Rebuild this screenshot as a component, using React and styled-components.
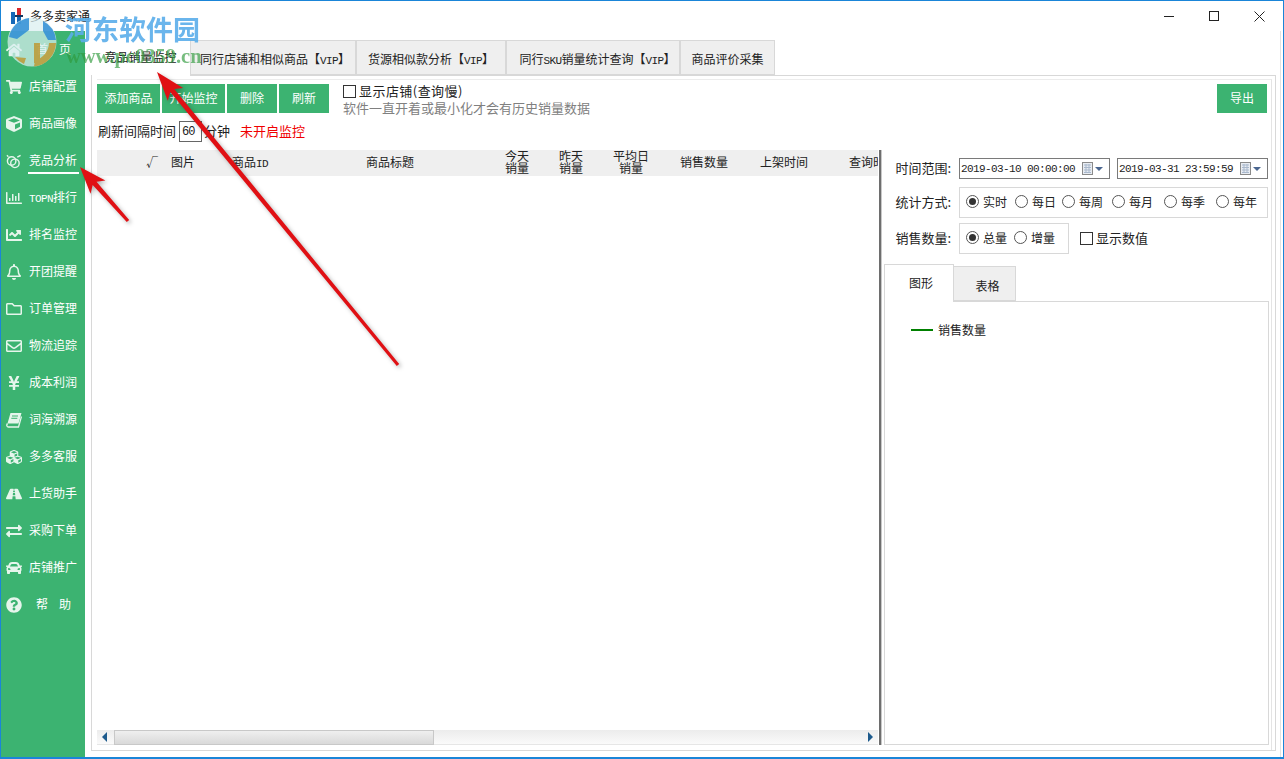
import React from "react";
import styled, { createGlobalStyle } from "styled-components";
import {
  FaHome,
  FaShoppingCart,
  FaCube,
  FaRegChartBar,
  FaChartLine,
  FaRegBell,
  FaRegFolder,
  FaRegEnvelope,
  FaYenSign,
  FaCubes,
  FaRoad,
  FaExchangeAlt,
  FaCar,
  FaQuestionCircle,
} from "react-icons/fa";

const GREEN = "#3cb371";
const LINE = "#d8d8d8";
const CJK = `"Noto Sans CJK SC", "Noto Sans", sans-serif`;
const NARROW = `11px "Liberation Mono", monospace`;

const Global = createGlobalStyle`
  html, body { margin: 0; padding: 0; background: #fff; }
  body { font: 12px ${CJK}; color: #222; }
  * { box-sizing: border-box; }
`;

const Window = styled.div`
  position: relative;
  width: 1284px;
  height: 759px;
  border: 1px solid #1a85d8;
  border-bottom-width: 2px;
  display: flex;
  flex-direction: column;
  overflow: hidden;
  background: #fff;
`;

const TitleBar = styled.div`
  height: 30px;
  flex: none;
  display: flex;
  align-items: center;
  padding-left: 9px;
`;

const TitleText = styled.span`
  margin-left: 6px;
  margin-bottom: 1px;
  font-size: 12px;
  color: #222;
`;

const WinButtons = styled.div`
  margin-left: auto;
  display: flex;
  align-items: center;
  margin-right: 18px;
  gap: 35px;
`;

const Body = styled.div`
  flex: 1;
  display: flex;
  min-height: 0;
`;

const Sidebar = styled.nav`
  width: 84px;
  flex: none;
  background: ${GREEN};
`;

const NavItem = styled.div`
  position: relative;
  height: 37px;
  display: flex;
  align-items: center;
  padding-left: 5px;
  color: #fff;
  font-size: 12px;
  &::after {
    content: "";
    display: ${(p) => (p.$active ? "block" : "none")};
    position: absolute;
    left: 27px;
    width: 51px;
    bottom: 5px;
    height: 2px;
    background: #fff;
  }
`;

const NavIcon = styled.span`
  width: 16px;
  height: 16px;
  flex: none;
  display: flex;
  align-items: center;
  justify-content: center;
  color: #e6f5ec;
  font-size: 16px;
`;

const NavLabel = styled.span`
  margin-left: ${(p) => (p.$wide ? "14px" : "7px")};
  width: ${(p) => (p.$wide ? "35px" : "auto")};
  padding-bottom: 2px;
  display: flex;
  justify-content: space-between;
  white-space: nowrap;
`;

const Half = styled.span`
  font: ${NARROW};
  letter-spacing: -0.6px;
`;

const Main = styled.main`
  flex: 1;
  min-width: 0;
  display: flex;
  flex-direction: column;
  padding: 7px 4px 6px 6px;
  margin-right: 2px;
  border-right: 1px solid #e2e2e2;
`;

const TabBar = styled.div`
  display: flex;
  align-items: flex-end;
  flex: none;
  padding-left: 1px;
`;

const TopTab = styled.div`
  position: relative;
  height: ${(p) => (p.$active ? "38px" : "35px")};
  width: ${(p) => p.$w}px;
  margin-bottom: ${(p) => (p.$active ? "-1px" : "0")};
  display: flex;
  align-items: center;
  justify-content: center;
  background: ${(p) => (p.$active ? "#fff" : "#efefef")};
  border: 1px solid ${LINE};
  border-left-width: ${(p) => (p.$active ? "0" : "1px")};
  border-bottom-width: ${(p) => (p.$active ? "0" : "1px")};
  border-top-color: ${(p) => (p.$active ? "#fff" : LINE)};
  border-right-color: ${(p) => (p.$active ? "#fff" : LINE)};
  z-index: ${(p) => (p.$active ? 1 : 0)};
  font-size: 12px;
  white-space: nowrap;
  padding-top: ${(p) => (p.$active ? "0" : "2px")};
  padding-bottom: ${(p) => (p.$active ? "2px" : "0")};
  padding-left: ${(p) => p.$pl || 0}px;
`;

const Panel = styled.section`
  flex: 1;
  min-height: 0;
  display: flex;
  border: 1px solid ${LINE};
  padding: 3px 3px 0 5px;
`;

const Inner = styled.div`
  flex: 1;
  min-width: 0;
  display: flex;
  flex-direction: column;
  border-top: 1px solid #ececec;
  border-right: 1px solid #e4e4e4;
`;

const TopArea = styled.div`
  flex: none;
  height: 70px;
  padding: 4px 4px 0 0;
  display: flex;
  align-items: flex-start;
`;

const LeftTools = styled.div`
  display: flex;
  flex-direction: column;
  gap: 8px;
`;

const Buttons = styled.div`
  display: flex;
  gap: 2px;
`;

const GreenButton = styled.button`
  width: ${(p) => p.$w}px;
  height: 29px;
  border: 0;
  padding: 0 0 2px;
  background: ${GREEN};
  color: #fff;
  font: 12px ${CJK};
`;

const ExportButton = styled(GreenButton)`
  margin-left: auto;
`;

const RefreshRow = styled.div`
  display: flex;
  align-items: center;
  height: 21px;
  padding: 0 0 0 1px;
  font-size: 13px;
  line-height: 19px;
`;

const RowText = styled.span`
  padding-bottom: 2px;
`;

const NumberBox = styled.div`
  width: 23px;
  height: 21px;
  margin: 0 2px 0 3px;
  border: 1px solid #666;
  font: 12px "Liberation Mono", monospace;
  letter-spacing: -1px;
  padding: 3px 0 0 2px;
  color: #222;
`;

const Stopped = styled(RowText)`
  margin-left: 10px;
  color: #f00000;
`;

const ShopOption = styled.div`
  margin: -2px 0 0 14px;
  font-size: 13px;
  line-height: 17px;
`;

const Note = styled.div`
  color: #808080;
  white-space: nowrap;
`;

const CheckLine = styled.label`
  display: flex;
  align-items: center;
  gap: 3px;
  font-size: 13px;
  white-space: nowrap;
`;

const ShopCheck = styled(CheckLine)`
  letter-spacing: 0.45px;
`;

const CheckBox = styled.span`
  width: 13px;
  height: 13px;
  margin-top: 2px;
  border: 1px solid #333;
  background: #fff;
  flex: none;
`;

const Workspace = styled.div`
  flex: 1;
  min-height: 0;
  display: flex;
  padding-bottom: 5px;
`;

const TableArea = styled.div`
  width: 781px;
  flex: none;
  display: flex;
  flex-direction: column;
`;

const TableHead = styled.div`
  height: 26px;
  flex: none;
  overflow: hidden;
  background: #efefef;
  display: grid;
  grid-template-columns: 43px 24px 38px 96px 184px 70px 38px 82px 64px 96px 82px;
  width: 100%;
`;

const HeadCell = styled.div`
  text-align: center;
  align-self: center;
  font-size: 12px;
  line-height: ${(p) => (p.$double ? "12px" : "18px")};
  padding-bottom: 2px;
  white-space: nowrap;
`;

const TableBody = styled.div`
  flex: 1;
`;

const HScroll = styled.div`
  height: 15px;
  flex: none;
  display: flex;
  align-items: center;
  padding: 0 5px;
  background: linear-gradient(#ececec, #fafafa);
  border-bottom: 1px solid #e6e6e6;
`;

const ScrollThumb = styled.div`
  width: 320px;
  height: 15px;
  margin-left: 7px;
  margin-right: auto;
  border: 1px solid #c8c8c8;
  background: linear-gradient(#efefef, #d9d9d9);
`;

const ScrollArrow = styled.span`
  width: 0;
  height: 0;
  border-top: 5px solid transparent;
  border-bottom: 5px solid transparent;
  border-right: ${(p) => (p.$right ? "0" : "5px solid #1d5a8c")};
  border-left: ${(p) => (p.$right ? "5px solid #1d5a8c" : "0")};
`;

const Splitter = styled.div`
  width: 3px;
  flex: none;
  background: #6e6e6e;
  border-right: 1px solid #c8c8c8;
  margin-left: 1px;
`;

const ChartSide = styled.aside`
  width: 385px;
  flex: none;
  margin-left: 2px;
  padding-top: 8px;
  display: flex;
  flex-direction: column;
`;

const FormRow = styled.div`
  display: flex;
  align-items: center;
  margin-bottom: ${(p) => p.$mb}px;
`;

const FormLabel = styled.div`
  width: 67px;
  margin-right: 8px;
  padding-bottom: 2px;
  font-size: 13px;
  text-align: right;
  white-space: nowrap;
`;

const DateBox = styled.div`
  width: 151px;
  height: 21px;
  flex: none;
  border: 1px solid #7a7a7a;
  display: flex;
  align-items: center;
  padding-left: 1px;
  margin-right: ${(p) => (p.$last ? "0" : "7px")};
  font: ${NARROW};
  letter-spacing: -0.6px;
  color: #222;
  white-space: nowrap;
`;

const DateIcon = styled.span`
  margin-left: auto;
  margin-right: 6px;
  display: flex;
  align-items: center;
  gap: 2px;
`;

const DropMark = styled.span`
  width: 0;
  height: 0;
  border-left: 4px solid transparent;
  border-right: 4px solid transparent;
  border-top: 4px solid #4a6690;
`;

const RadioGroup = styled.div`
  width: ${(p) => p.$w}px;
  height: 31px;
  flex: none;
  border: 1px solid ${LINE};
  display: flex;
  align-items: center;
  padding-left: 6px;
`;

const RadioItem = styled.div`
  width: ${(p) => p.$w}px;
  flex: none;
  display: flex;
  align-items: center;
  gap: 4px;
  padding-bottom: 2px;
  font-size: 12px;
`;

const RadioDot = styled.span`
  width: 13px;
  height: 13px;
  flex: none;
  border-radius: 50%;
  border: 1px solid #555;
  display: flex;
  align-items: center;
  justify-content: center;
  &::after {
    content: "";
    display: ${(p) => (p.$on ? "block" : "none")};
    width: 7px;
    height: 7px;
    border-radius: 50%;
    background: #333;
  }
`;

const ValueCheck = styled(CheckLine)`
  margin-left: 11px;
  padding-bottom: 3px;
`;

const SubTabs = styled.div`
  display: flex;
  align-items: flex-end;
  margin-top: 5px;
  flex: none;
`;

const SubTab = styled.div`
  position: relative;
  width: ${(p) => p.$w}px;
  height: ${(p) => (p.$active ? "38px" : "35px")};
  margin-bottom: ${(p) => (p.$active ? "-1px" : "0")};
  display: flex;
  align-items: center;
  justify-content: center;
  background: ${(p) => (p.$active ? "#fff" : "#efefef")};
  border: 1px solid ${LINE};
  border-bottom-width: ${(p) => (p.$active ? "0" : "1px")};
  border-left-width: ${(p) => (p.$active ? "1px" : "0")};
  z-index: ${(p) => (p.$active ? 1 : 0)};
  padding-bottom: ${(p) => (p.$active ? "2px" : "0")};
  padding-top: ${(p) => (p.$active ? "0" : "3px")};
  padding-left: ${(p) => (p.$active ? "4px" : "6px")};
`;

const SubPanel = styled.div`
  flex: 1;
  border: 1px solid ${LINE};
  padding: 19px 0 0 26px;
`;

const Legend = styled.div`
  display: flex;
  align-items: center;
  gap: 5px;
`;

const LegendLine = styled.span`
  width: 22px;
  height: 2px;
  background: #008000;
`;

const Overlay = styled.div`
  position: absolute;
  left: -1px;
  top: -1px;
  width: 1284px;
  height: 759px;
  pointer-events: none;
  z-index: 5;
`;

const WatermarkLogo = styled.svg`
  position: absolute;
  left: 7px;
  top: 17px;
`;

const WatermarkName = styled.div`
  position: absolute;
  left: 65px;
  top: 9px;
  font: bold 27px "Noto Sans CJK SC", sans-serif;
  color: #5aaeea;
  opacity: 0.9;
  white-space: nowrap;
`;

const WatermarkUrl = styled.div`
  position: absolute;
  left: 66px;
  top: 45px;
  font: bold 20.5px "Liberation Serif", serif;
  color: #2f9a3c;
  opacity: 0.65;
  white-space: nowrap;
`;

const ArrowLayer = styled.svg`
  position: absolute;
  left: 0;
  top: 0;
  filter: drop-shadow(2px 2px 2px rgba(0, 0, 0, 0.3));
`;

// tail -> tip, a shaft that widens a little towards a notched head
const arrowPoints = ([tx, ty], [hx, hy], len, half, neck, tail) => {
  const d = Math.hypot(hx - tx, hy - ty);
  const ux = (hx - tx) / d;
  const uy = (hy - ty) / d;
  const nx = -uy;
  const ny = ux;
  const bx = hx - ux * len;
  const by = hy - uy * len;
  const pt = (x, y) => `${x.toFixed(1)},${y.toFixed(1)}`;
  return [
    pt(tx + nx * tail, ty + ny * tail),
    pt(bx + nx * neck, by + ny * neck),
    pt(bx - ux * 5 + nx * half, by - uy * 5 + ny * half),
    pt(hx, hy),
    pt(bx - ux * 5 - nx * half, by - uy * 5 - ny * half),
    pt(bx - nx * neck, by - ny * neck),
    pt(tx - nx * tail, ty - ny * tail),
  ].join(" ");
};

const CompareIcon = () => (
  <svg width="17" height="16" viewBox="0 0 17 16" fill="none" stroke="currentColor" strokeWidth="1.5">
    <circle cx="6" cy="8" r="4.5" />
    <circle cx="9.5" cy="10.5" r="4.5" />
    <path d="M12 4 L15.5 2 M2.5 3.5 L1 2" />
  </svg>
);

const SlantedBook = () => (
  <svg width="16" height="16" viewBox="0 0 16 16">
    <path d="M4.5 1H15.5L12.5 11.5H1.5z" fill="currentColor" />
    <path d="M6 4h6M5.3 6.3h6" stroke={GREEN} />
    <path d="M1.5 11.5C0.2 13.2 0.8 15 2.5 15H12.5L15.5 4.5" fill="none" stroke="currentColor" strokeWidth="1.3" />
  </svg>
);

const NAV = [
  { icon: <FaHome />, label: ["首", "页"], wide: true },
  { icon: <FaShoppingCart />, label: "店铺配置" },
  { icon: <FaCube />, label: "商品画像" },
  { icon: <CompareIcon />, label: "竞品分析", active: true },
  { icon: <FaRegChartBar />, label: <><Half>TOPN</Half>排行</> },
  { icon: <FaChartLine />, label: "排名监控" },
  { icon: <FaRegBell />, label: "开团提醒" },
  { icon: <FaRegFolder />, label: "订单管理" },
  { icon: <FaRegEnvelope />, label: "物流追踪" },
  { icon: <FaYenSign />, label: "成本利润" },
  { icon: <SlantedBook />, label: "词海溯源" },
  { icon: <FaCubes />, label: "多多客服" },
  { icon: <FaRoad />, label: "上货助手" },
  { icon: <FaExchangeAlt />, label: "采购下单" },
  { icon: <FaCar />, label: "店铺推广" },
  { icon: <FaQuestionCircle />, label: ["帮", "助"], wide: true },
];

const HEADS = [
  { text: "" },
  { text: "√" },
  { text: "图片" },
  { text: <>商品<Half>ID</Half></> },
  { text: "商品标题" },
  { text: <>今天<br />销量</>, double: true },
  { text: <>昨天<br />销量</>, double: true },
  { text: <>平均日<br />销量</>, double: true },
  { text: "销售数量" },
  { text: "上架时间" },
  { text: "查询时间" },
];

const CalendarIcon = () => (
  <svg width="11" height="13" viewBox="0 0 11 13">
    <rect x="0.5" y="0.5" width="10" height="12" fill="#e8ecf2" stroke="#8a8a8a" />
    <path d="M2 3h7M2 5.5h7M2 8h7M2 10.5h7M4 2v9M7 2v9" stroke="#a9b8cc" />
  </svg>
);

const DateField = ({ value, last }) => (
  <DateBox $last={last}>
    {value}
    <DateIcon>
      <CalendarIcon />
      <DropMark />
    </DateIcon>
  </DateBox>
);

export default function App() {
  return (
    <>
      <Global />
      <Window>
        <TitleBar>
          <svg width="14" height="16" viewBox="0 0 14 16">
            <rect x="1" y="4" width="4" height="12" fill="#1668b8" />
            <rect x="7" y="0" width="4" height="7" fill="#d8262c" />
            <rect x="7" y="9" width="4" height="7" fill="#1668b8" />
            <rect x="5" y="7" width="8" height="2" fill="#12365f" />
          </svg>
          <TitleText>多多卖家通</TitleText>
          <WinButtons>
            <svg width="10" height="10" viewBox="0 0 10 10">
              <path d="M0 5.5h10" stroke="#222" />
            </svg>
            <svg width="10" height="10" viewBox="0 0 10 10" fill="none">
              <rect x="0.5" y="0.5" width="9" height="9" stroke="#222" />
            </svg>
            <svg width="11" height="11" viewBox="0 0 11 11">
              <path d="M0.5 0.5l10 10M10.5 0.5l-10 10" stroke="#222" />
            </svg>
          </WinButtons>
        </TitleBar>
        <Body>
          <Sidebar>
            {NAV.map((item, i) => (
              <NavItem key={i} $active={item.active}>
                <NavIcon>{item.icon}</NavIcon>
                <NavLabel $wide={item.wide}>
                  {Array.isArray(item.label)
                    ? item.label.map((c) => <span key={c}>{c}</span>)
                    : <span>{item.label}</span>}
                </NavLabel>
              </NavItem>
            ))}
          </Sidebar>
          <Main>
            <TabBar>
              <TopTab $active $w={98}>竞品销量监控</TopTab>
              <TopTab $w={166} $pl={4}><span>同行店铺和相似商品【<Half>VIP</Half>】</span></TopTab>
              <TopTab $w={150}><span>货源相似款分析【<Half>VIP</Half>】</span></TopTab>
              <TopTab $w={174} $pl={9}><span>同行<Half>SKU</Half>销量统计查询【<Half>VIP</Half>】</span></TopTab>
              <TopTab $w={95}>商品评价采集</TopTab>
            </TabBar>
            <Panel>
              <Inner>
                <TopArea>
                  <LeftTools>
                    <Buttons>
                      <GreenButton $w={63}>添加商品</GreenButton>
                      <GreenButton $w={63}>开始监控</GreenButton>
                      <GreenButton $w={50}>删除</GreenButton>
                      <GreenButton $w={50}>刷新</GreenButton>
                    </Buttons>
                    <RefreshRow>
                      <RowText>刷新间隔时间</RowText>
                      <NumberBox>60</NumberBox>
                      <RowText>分钟</RowText>
                      <Stopped>未开启监控</Stopped>
                    </RefreshRow>
                  </LeftTools>
                  <ShopOption>
                    <ShopCheck>
                      <CheckBox />
                      显示店铺(查询慢)
                    </ShopCheck>
                    <Note>软件一直开着或最小化才会有历史销量数据</Note>
                  </ShopOption>
                  <ExportButton $w={50}>导出</ExportButton>
                </TopArea>
                <Workspace>
                  <TableArea>
                    <TableHead>
                      {HEADS.map((h, i) => (
                        <HeadCell key={i} $double={h.double}>{h.text}</HeadCell>
                      ))}
                    </TableHead>
                    <TableBody />
                    <HScroll>
                      <ScrollArrow />
                      <ScrollThumb />
                      <ScrollArrow $right />
                    </HScroll>
                  </TableArea>
                  <Splitter />
                  <ChartSide>
                    <FormRow $mb={8}>
                      <FormLabel>时间范围:</FormLabel>
                      <DateField value="2019-03-10 00:00:00" />
                      <DateField value="2019-03-31 23:59:59" last />
                    </FormRow>
                    <FormRow $mb={5}>
                      <FormLabel>统计方式:</FormLabel>
                      <RadioGroup $w={309}>
                        <RadioItem $w={49}><RadioDot $on />实时</RadioItem>
                        <RadioItem $w={47}><RadioDot />每日</RadioItem>
                        <RadioItem $w={50}><RadioDot />每周</RadioItem>
                        <RadioItem $w={52}><RadioDot />每月</RadioItem>
                        <RadioItem $w={52}><RadioDot />每季</RadioItem>
                        <RadioItem $w={48}><RadioDot />每年</RadioItem>
                      </RadioGroup>
                    </FormRow>
                    <FormRow $mb={5}>
                      <FormLabel>销售数量:</FormLabel>
                      <RadioGroup $w={110}>
                        <RadioItem $w={48}><RadioDot $on />总量</RadioItem>
                        <RadioItem $w={48}><RadioDot />增量</RadioItem>
                      </RadioGroup>
                      <ValueCheck>
                        <CheckBox />
                        显示数值
                      </ValueCheck>
                    </FormRow>
                    <SubTabs>
                      <SubTab $active $w={70}>图形</SubTab>
                      <SubTab $w={62}>表格</SubTab>
                    </SubTabs>
                    <SubPanel>
                      <Legend>
                        <LegendLine />
                        销售数量
                      </Legend>
                    </SubPanel>
                  </ChartSide>
                </Workspace>
              </Inner>
            </Panel>
          </Main>
        </Body>
        <Overlay>
          <WatermarkLogo width="50" height="50" viewBox="0 0 50 50">
            <circle cx="25" cy="25" r="24.5" fill="#d9eef0" opacity="0.72" />
            <g opacity="0.85">
              <path d="M2 20A24 24 0 0 1 22 1V13L10 22z" fill="#2e8ed6" />
              <path d="M36 4A24 24 0 0 1 49 23H41L36 14z" fill="#2e8ed6" />
              <path d="M49 26A24 24 0 0 1 27 49.5L28 43A18 18 0 0 0 42 26z" fill="#bd9a35" />
              <path d="M27 26h6v20h-6z" fill="#bd9a35" />
              <path d="M8 40A24 24 0 0 0 17 47L19 41z" fill="#bd9a35" />
            </g>
          </WatermarkLogo>
          <WatermarkName>河东软件园</WatermarkName>
          <WatermarkUrl>www.pc0359.cn</WatermarkUrl>
          <ArrowLayer width="1284" height="759" viewBox="0 0 1284 759">
            <polygon points={arrowPoints([398, 365], [157, 72], 24, 10, 2.5, 1.6)} fill="#e01014" />
            <polygon points={arrowPoints([128, 221], [80, 167], 22, 10, 2.5, 1.6)} fill="#e01014" />
          </ArrowLayer>
        </Overlay>
      </Window>
    </>
  );
}
